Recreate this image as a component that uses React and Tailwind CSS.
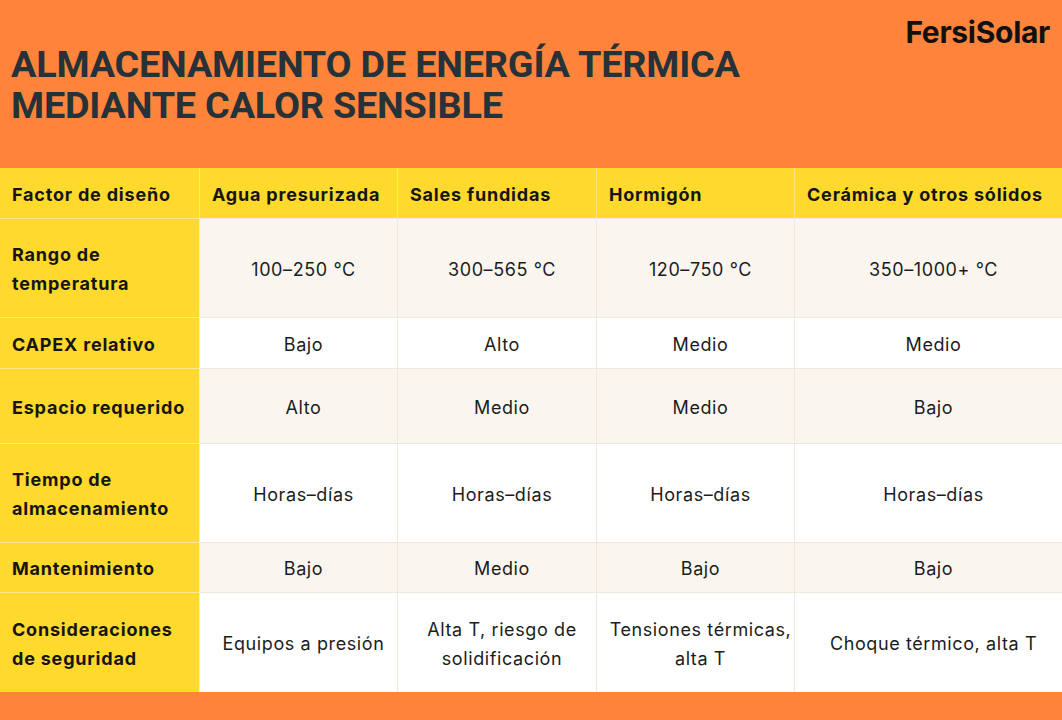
import React from 'react';

const headers = ['Factor de diseño', 'Agua presurizada', 'Sales fundidas', 'Hormigón', 'Cerámica y otros sólidos'];

const rows = [
  { h: 'h-[99px]', label: ['Rango de', 'temperatura'], cells: ['100–250 °C', '300–565 °C', '120–750 °C', '350–1000+ °C'] },
  { h: 'h-[51px]', label: ['CAPEX relativo'], cells: ['Bajo', 'Alto', 'Medio', 'Medio'] },
  { h: 'h-[75px]', label: ['Espacio requerido'], cells: ['Alto', 'Medio', 'Medio', 'Bajo'] },
  { h: 'h-[99px]', label: ['Tiempo de', 'almacenamiento'], cells: ['Horas–días', 'Horas–días', 'Horas–días', 'Horas–días'] },
  { h: 'h-[50px]', label: ['Mantenimiento'], cells: ['Bajo', 'Medio', 'Bajo', 'Bajo'] },
  { h: 'h-[100px]', label: ['Consideraciones', 'de seguridad'], cells: [['Equipos a presión'], ['Alta T, riesgo de', 'solidificación'], ['Tensiones térmicas,', 'alta T'], ['Choque térmico, alta T']] },
];

const cols = 'grid grid-cols-[199px_198px_199px_198px_1fr]';

const Lines = ({ lines }) => (
  <>
    {[].concat(lines).map((l, i) => (
      <span key={i} className="block">{l}</span>
    ))}
  </>
);

const App = () => {
  return (
    <div className="w-[1062px] h-[720px] bg-[#fe843b] flex flex-col overflow-hidden font-['Inter',sans-serif]">
      <header className="h-[168px] flex justify-between px-[11px]">
        <h1 className="mt-[44px] font-['Roboto',sans-serif] font-bold text-[37.8px] leading-[41px] text-[#263238] tracking-[-0.2px]">
          ALMACENAMIENTO DE ENERGÍA TÉRMICA
          <br />
          MEDIANTE CALOR SENSIBLE
        </h1>
        <div className="mt-[10px] mr-[1px] text-[30px] font-bold tracking-[-0.3px] text-[#111]">FersiSolar</div>
      </header>

      <div className="flex flex-col">
        <div className={`${cols} h-[50px] bg-[#ffd92b] text-[18px] font-bold tracking-[0.8px] text-[#151515]`}>
          {headers.map((t, i) => (
            <div key={i} className={`flex items-center px-3 pt-[3px] ${i > 0 ? 'border-l border-[#fbe57a]' : ''}`}>{t}</div>
          ))}
        </div>
        {rows.map((r, ri) => (
          <div key={ri} className={`${cols} ${r.h} text-[18px] text-[#1c1c1c] border-t ${ri % 2 === 0 ? 'bg-[#faf6ef]' : 'bg-white'} border-[#efe8dc]`}>
            <div className="flex flex-col justify-center px-3 pt-[2px] bg-[#ffd92b] font-bold tracking-[0.8px] leading-[29px] text-[#151515] border-t border-[#fde98e] -mt-px">
              <Lines lines={r.label} />
            </div>
            {r.cells.map((c, ci) => (
              <div key={ci} className="flex flex-col justify-center items-center pl-[10px] pt-[2px] text-center tracking-[0.6px] leading-[29px] border-l border-[#efe8dc]">
                <Lines lines={c} />
              </div>
            ))}
          </div>
        ))}
      </div>
      <div className="flex-1" />
    </div>
  );
};

export default App;
